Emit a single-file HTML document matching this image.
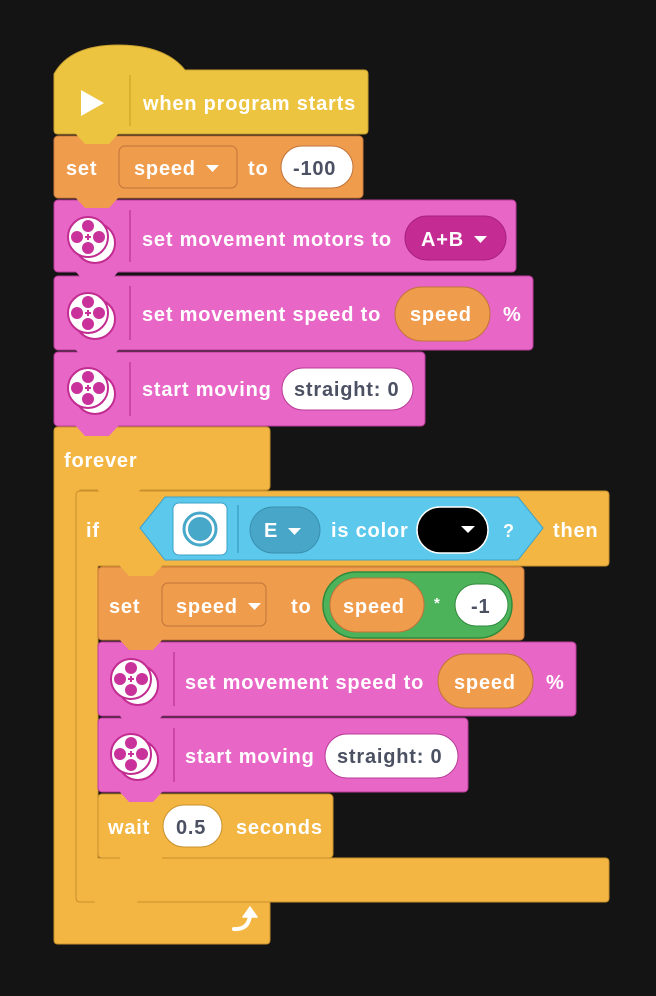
<!DOCTYPE html>
<html><head><meta charset="utf-8"><style>
html,body{margin:0;padding:0;background:#141414;}
svg{display:block}
text{font-family:"Liberation Sans",sans-serif;font-weight:bold;font-size:20px;letter-spacing:0.8px;fill:#fff;}
.d{fill:#4b5163}
</style></head><body>
<svg width="656" height="996" viewBox="0 0 656 996">
<defs>
<g id="mot">
<circle cx="7" cy="6" r="20" fill="#fff" stroke="#c22c90" stroke-width="2"/>
<circle cx="0" cy="0" r="20" fill="#fff" stroke="#c22c90" stroke-width="2"/>
<circle cx="0" cy="-11" r="6" fill="#c8329a"/><circle cx="0" cy="11" r="6" fill="#c8329a"/>
<circle cx="-11" cy="0" r="6" fill="#c8329a"/><circle cx="11" cy="0" r="6" fill="#c8329a"/>
<path d="M-3 0H3M0 -3V3" stroke="#c8329a" stroke-width="2"/>
</g>
</defs>
<path d="M54 431q0-4 4-4H266q4 0 4 4V486q0 4-4 4H80v410h186q4 0 4 4v36q0 4-4 4H58q-4 0-4-4Z" fill="#f3b643" stroke="#c8902c" stroke-width="1"/>
<path d="M76 495q0-4 4-4H605q4 0 4 4V562q0 4-4 4H98v292h507q4 0 4 4v36q0 4-4 4H80q-4 0-4-4Z" fill="#f3b643" stroke="#c8902c" stroke-width="1"/>
<path d="M54 74Q70 45 118 45Q165 45 185 70H364q4 0 4 4V130q0 4-4 4H58q-4 0-4-4Z" fill="#ecc440" stroke="#c9a030" stroke-width="1"/>
<rect x="54" y="136" width="309" height="62" rx="4" fill="#f09c4d" stroke="#c8783a"/>
<rect x="54" y="200" width="462" height="72" rx="4" fill="#e866c6" stroke="#b83c98"/>
<rect x="54" y="276" width="479" height="74" rx="4" fill="#e866c6" stroke="#b83c98"/>
<rect x="54" y="352" width="371" height="74" rx="4" fill="#e866c6" stroke="#b83c98"/>
<rect x="98" y="567" width="426" height="73" rx="4" fill="#f09c4d" stroke="#c8783a"/>
<rect x="98" y="642" width="478" height="74" rx="4" fill="#e866c6" stroke="#b83c98"/>
<rect x="98" y="718" width="370" height="74" rx="4" fill="#e866c6" stroke="#b83c98"/>
<rect x="98" y="794" width="235" height="64" rx="4" fill="#f3b643" stroke="#c8902c"/>
<g>
<path d="M75 133L85 144H109L119 133Z" fill="#ecc440"/>
<path d="M75 197L85 208H109L119 197Z" fill="#f09c4d"/>
<path d="M75 271L85 282H109L119 271Z" fill="#e866c6"/>
<path d="M75 349L85 360H109L119 349Z" fill="#e866c6"/>
<path d="M75 425L85 436H109L119 425Z" fill="#e866c6"/>
<path d="M97 489L107 500H131L141 489Z" fill="#f3b643"/>
<path d="M119 565L129 576H153L163 565Z" fill="#f3b643"/>
<path d="M119 639L129 650H153L163 639Z" fill="#f09c4d"/>
<path d="M119 715L129 726H153L163 715Z" fill="#e866c6"/>
<path d="M119 791L129 802H153L163 791Z" fill="#e866c6"/>
<path d="M119 857L129 868H153L163 857Z" fill="#f3b643"/>
<path d="M94 901L104 912H128L138 901Z" fill="#f3b643"/>
</g>
<path d="M81 90L104 103L81 116Z" fill="#fff"/>
<line x1="130" y1="75" x2="130" y2="126" stroke="#d4aa2c" stroke-width="1.5"/>
<text x="143" y="110">when program starts</text>
<text x="66" y="175">set</text>
<rect x="119" y="146" width="118" height="42" rx="6" fill="#f09c4d" stroke="#c0733a"/>
<text x="134" y="175">speed</text><path d="M206 165h13l-6.5 7z" fill="#fff"/>
<text x="248" y="175">to</text>
<rect x="281" y="146" width="72" height="42" rx="21" fill="#fff" stroke="#c0733a"/>
<text x="293" y="175" class="d">-100</text>
<use href="#mot" x="88" y="237"/>
<line x1="130" y1="210" x2="130" y2="262" stroke="#c23c9c" stroke-width="1.5"/>
<text x="142" y="246">set movement motors to</text>
<rect x="405" y="216" width="101" height="44" rx="22" fill="#c52c93" stroke="#a82080"/>
<text x="421" y="246">A+B</text><path d="M474 236h13l-6.5 7z" fill="#fff"/>
<use href="#mot" x="88" y="313"/>
<line x1="130" y1="286" x2="130" y2="340" stroke="#c23c9c" stroke-width="1.5"/>
<text x="142" y="321">set movement speed to</text>
<rect x="395" y="287" width="95" height="54" rx="27" fill="#f09c4d" stroke="#c0733a"/>
<text x="410" y="321">speed</text>
<text x="503" y="321">%</text>
<use href="#mot" x="88" y="388"/>
<line x1="130" y1="362" x2="130" y2="416" stroke="#c23c9c" stroke-width="1.5"/>
<text x="142" y="396">start moving</text>
<rect x="282" y="368" width="131" height="42" rx="21" fill="#fff" stroke="#b83c98"/>
<text x="294" y="396" class="d">straight: 0</text>
<text x="64" y="467">forever</text>
<path d="M234 929Q248 930 250 916" fill="none" stroke="#fff" stroke-width="4" stroke-linecap="round"/>
<path d="M243 917L250 907L257 917Z" fill="#fff" stroke="#fff" stroke-width="1.5" stroke-linejoin="round"/>
<text x="86" y="537">if</text>
<path d="M140 528L165 497H518L543 528L518 560H165Z" fill="#5cc9ec" stroke="#3ea0c8"/>
<rect x="173" y="503" width="54" height="52" rx="6" fill="#fff" stroke="#3ea0c8"/>
<circle cx="200" cy="529" r="16" fill="none" stroke="#47a8c9" stroke-width="3"/>
<circle cx="200" cy="529" r="12" fill="#47a8c9"/>
<line x1="238" y1="505" x2="238" y2="553" stroke="#3ea0c8" stroke-width="1.5"/>
<rect x="250" y="507" width="70" height="46" rx="23" fill="#48a7c8" stroke="#3a8fb0"/>
<text x="264" y="537">E</text><path d="M288 528h13l-6.5 7z" fill="#fff"/>
<text x="331" y="537">is color</text>
<rect x="417" y="507" width="71" height="46" rx="23" fill="#000" stroke="#fff" stroke-width="1.5"/>
<path d="M461 526h14l-7 7z" fill="#fff"/>
<text x="503" y="537" style="font-size:18px">?</text>
<text x="553" y="537">then</text>
<text x="109" y="613">set</text>
<rect x="162" y="583" width="104" height="43" rx="6" fill="#f09c4d" stroke="#c0733a"/>
<text x="176" y="613">speed</text><path d="M248 603h13l-6.5 7z" fill="#fff"/>
<text x="291" y="613">to</text>
<rect x="323" y="572" width="189" height="66" rx="33" fill="#4db35b" stroke="#2f8a3c" stroke-width="1.5"/>
<rect x="330" y="578" width="94" height="54" rx="27" fill="#f09c4d" stroke="#c0733a"/>
<text x="343" y="613">speed</text>
<text x="434" y="608" style="font-size:15px">*</text>
<rect x="455" y="584" width="53" height="42" rx="21" fill="#fff" stroke="#2f8a3c"/>
<text x="471" y="613" class="d">-1</text>
<use href="#mot" x="131" y="679"/>
<line x1="174" y1="652" x2="174" y2="706" stroke="#c23c9c" stroke-width="1.5"/>
<text x="185" y="689">set movement speed to</text>
<rect x="438" y="654" width="95" height="54" rx="27" fill="#f09c4d" stroke="#c0733a"/>
<text x="454" y="689">speed</text>
<text x="546" y="689">%</text>
<use href="#mot" x="131" y="754"/>
<line x1="174" y1="728" x2="174" y2="782" stroke="#c23c9c" stroke-width="1.5"/>
<text x="185" y="763">start moving</text>
<rect x="325" y="734" width="133" height="44" rx="22" fill="#fff" stroke="#b83c98"/>
<text x="337" y="763" class="d">straight: 0</text>
<text x="108" y="834">wait</text>
<rect x="163" y="805" width="59" height="42" rx="21" fill="#fff" stroke="#c8902c"/>
<text x="176" y="834" class="d">0.5</text>
<text x="236" y="834">seconds</text>
</svg>
</body></html>
